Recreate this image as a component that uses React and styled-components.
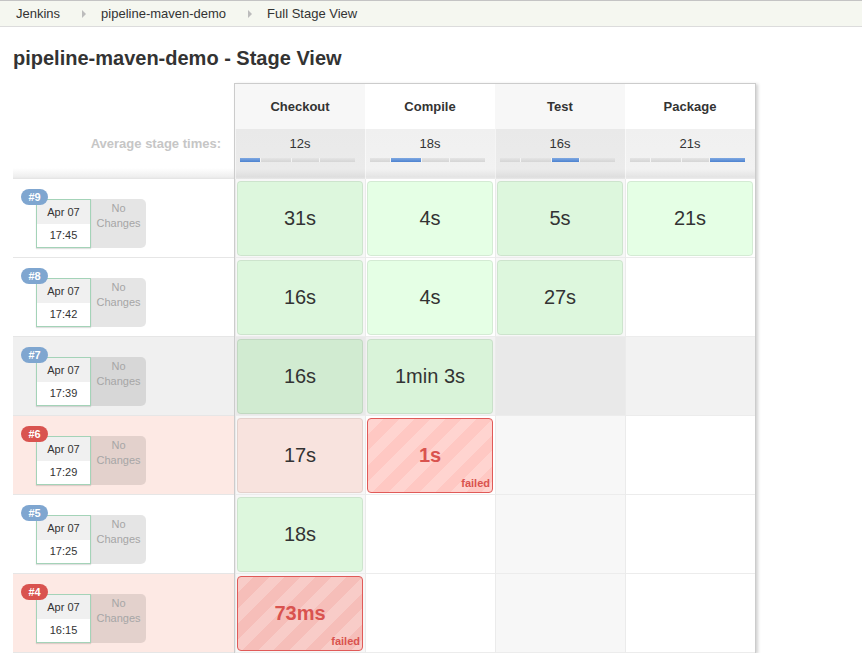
import React from 'react';
import styled, { createGlobalStyle, css } from 'styled-components';

const GlobalStyle = createGlobalStyle`
  body {
    margin: 0;
    background: #fff;
    color: #333;
    font-family: "Liberation Sans", Arial, sans-serif;
  }
`;

const stages = [
    { name: 'Checkout', avg: '12s', weight: 12 },
    { name: 'Compile', avg: '18s', weight: 18 },
    { name: 'Test', avg: '16s', weight: 16 },
    { name: 'Package', avg: '21s', weight: 21 },
];

const runs = [
    { id: 9, date: 'Apr 07', time: '17:45', tone: 'plain', cells: [{ t: '31s' }, { t: '4s' }, { t: '5s' }, { t: '21s' }] },
    { id: 8, date: 'Apr 07', time: '17:42', tone: 'plain', cells: [{ t: '16s' }, { t: '4s' }, { t: '27s' }, null] },
    { id: 7, date: 'Apr 07', time: '17:39', tone: 'gray', cells: [{ t: '16s' }, { t: '1min 3s' }, null, null] },
    { id: 6, date: 'Apr 07', time: '17:29', tone: 'failed', cells: [{ t: '17s', pink: true }, { t: '1s', failed: true }, null, null] },
    { id: 5, date: 'Apr 07', time: '17:25', tone: 'plain', cells: [{ t: '18s' }, null, null, null] },
    { id: 4, date: 'Apr 07', time: '16:15', tone: 'failed', cells: [{ t: '73ms', failed: true }, null, null, null] },
];

const rowBg = { plain: '#fff', gray: '#f0f0f0', failed: '#fde9e4' };

const cellBg = (tone, odd) => {
    if (tone === 'gray') return odd ? '#e9e9e9' : '#f2f2f2';
    return odd ? '#f7f7f7' : '#fff';
};

const App = () => {
    return (
        <Page>
            <GlobalStyle />
            <Breadcrumb>
                <Crumb>Jenkins</Crumb>
                <Arrow />
                <Crumb>pipeline-maven-demo</Crumb>
                <Arrow />
                <Crumb>Full Stage View</Crumb>
            </Breadcrumb>
            <Title>pipeline-maven-demo - Stage View</Title>
            <Board>
                <LeftCol>
                    <HeadSpacer />
                    <AvgLabel>Average stage times:</AvgLabel>
                    {runs.map((run) => (
                        <RunRow key={run.id} $tone={run.tone}>
                            <Badge $failed={run.tone === 'failed'}>#{run.id}</Badge>
                            <DateBox>
                                <DateTop>{run.date}</DateTop>
                                <DateBottom>{run.time}</DateBottom>
                            </DateBox>
                            <Changes>
                                No
                                <br />
                                Changes
                            </Changes>
                        </RunRow>
                    ))}
                </LeftCol>
                <Panel>
                    {stages.map((s, i) => (
                        <HeadCell key={s.name} $odd={i % 2 === 0}>
                            {s.name}
                        </HeadCell>
                    ))}
                    {stages.map((s, i) => (
                        <AvgCell key={s.name} $odd={i % 2 === 0}>
                            <AvgTime>{s.avg}</AvgTime>
                            <Bar>
                                {stages.map((b, j) => (
                                    <Segment key={b.name} $active={i === j} style={{ flexGrow: b.weight }} />
                                ))}
                            </Bar>
                        </AvgCell>
                    ))}
                    {runs.map((run) =>
                        run.cells.map((c, i) => (
                            <StageCell key={run.id + '-' + i} $bg={cellBg(run.tone, i % 2 === 0)}>
                                {c && c.failed && (
                                    <FailedBox $dark={run.id === 4}>
                                        {c.t}
                                        <FailedTag>failed</FailedTag>
                                    </FailedBox>
                                )}
                                {c && !c.failed && <OkBox $pink={c.pink}>{c.t}</OkBox>}
                            </StageCell>
                        ))
                    )}
                </Panel>
            </Board>
        </Page>
    );
};

var Page = styled.div`
    width: 862px;
`;

var Breadcrumb = styled.div`
    display: flex;
    align-items: center;
    height: 25px;
    padding-left: 16px;
    background: #f5f7f0;
    border-top: 1px solid #c4c4c4;
    border-bottom: 1px solid #dcdcdc;
    font-size: 13px;
`;

var Crumb = styled.span`
    color: #333;
`;

var Arrow = styled.span`
    width: 0;
    height: 0;
    margin: 0 15px 0 22px;
    border-left: 4px solid #bcbcbc;
    border-top: 4px solid transparent;
    border-bottom: 4px solid transparent;
`;

var Title = styled.h1`
    margin: 19px 0 13px 13px;
    font-size: 20px;
    line-height: 24px;
    font-weight: bold;
    color: #333;
`;

var Board = styled.div`
    display: flex;
    align-items: flex-start;
`;

var LeftCol = styled.div`
    width: 221px;
    margin-left: 13px;
`;

var HeadSpacer = styled.div`
    height: 46px;
`;

var AvgLabel = styled.div`
    height: 50px;
    box-sizing: border-box;
    padding: 7px 13px 0 0;
    line-height: 16px;
    text-align: right;
    font-size: 13px;
    font-weight: bold;
    color: #c6c6c6;
    background: linear-gradient(to bottom, #fff 78%, #eeeeee 96%, #e2e2e2);
`;

var RunRow = styled.div`
    position: relative;
    display: flex;
    height: 79px;
    box-sizing: border-box;
    padding: 20px 0 0 23px;
    background: ${(p) => rowBg[p.$tone]};
    border-bottom: 1px solid #e6e6e6;
`;

var Badge = styled.span`
    position: absolute;
    left: 8px;
    top: 10px;
    z-index: 1;
    width: 27px;
    height: 16px;
    border-radius: 8px;
    background: ${(p) => (p.$failed ? '#d9534f' : '#7fa6d0')};
    color: #fff;
    font-size: 11px;
    font-weight: bold;
    line-height: 16px;
    text-align: center;
`;

var DateBox = styled.div`
    width: 55px;
    height: 49px;
    box-sizing: border-box;
    border: 1px solid #a4d3b8;
    background: #fff;
    box-shadow: 0 1px 1px rgba(0, 0, 0, 0.12);
    font-size: 11px;
    text-align: center;
    color: #333;
`;

var DateTop = styled.div`
    height: 24px;
    line-height: 24px;
    background: #f0f0f0;
`;

var DateBottom = styled.div`
    line-height: 23px;
`;

var Changes = styled.div`
    width: 55px;
    height: 49px;
    box-sizing: border-box;
    padding-top: 2px;
    border-radius: 0 5px 5px 0;
    background: rgba(0, 0, 0, 0.1);
    color: #a6a6a6;
    font-size: 11px;
    line-height: 15px;
    text-align: center;
`;

var Panel = styled.div`
    display: grid;
    grid-template-columns: repeat(4, 130px);
    border: 1px solid #cccccc;
    border-bottom: none;
    box-shadow: 2px 1px 3px rgba(0, 0, 0, 0.18);
`;

var HeadCell = styled.div`
    height: 45px;
    display: flex;
    align-items: center;
    justify-content: center;
    background: ${(p) => (p.$odd ? '#f7f7f7' : '#fff')};
    font-size: 13px;
    font-weight: bold;
    color: #333;
`;

var AvgCell = styled.div`
    height: 50px;
    box-sizing: border-box;
    padding-top: 7px;
    box-shadow: inset 1px 0 0 rgba(255, 255, 255, 0.5);
    background: ${(p) =>
        p.$odd
            ? 'linear-gradient(to bottom, #e9e9e9, #ebebeb 80%, #dedede 96%, #e8e8e8)'
            : 'linear-gradient(to bottom, #f0f0f0, #f2f2f2 80%, #e4e4e4 96%, #ececec)'};
`;

var AvgTime = styled.div`
    line-height: 16px;
    font-size: 13px;
    text-align: center;
    color: #333;
`;

var Bar = styled.div`
    display: flex;
    width: 115px;
    height: 4px;
    margin: 6px 0 0 5px;
`;

var Segment = styled.div`
    flex-basis: 0;
    background: ${(p) => (p.$active ? 'linear-gradient(#7fa8e2, #4d82d0)' : 'linear-gradient(#e4e4e4, #d5d5d5)')};
    & + & {
        border-left: 1px solid #f4f4f4;
    }
`;

var StageCell = styled.div`
    height: 79px;
    box-sizing: border-box;
    padding: 2px;
    background: ${(p) => p.$bg};
    box-shadow: inset 1px 0 0 #ebebeb, inset 0 -1px 0 #ececec;
`;

var boxBase = css`
    position: relative;
    height: 100%;
    box-sizing: border-box;
    display: flex;
    align-items: center;
    justify-content: center;
    border-radius: 4px;
    font-size: 20px;
`;

var OkBox = styled.div`
    ${boxBase};
    border: 1px solid rgba(0, 0, 0, 0.08);
    background: ${(p) => (p.$pink ? '#f8e3de' : 'rgba(0, 255, 0, 0.1)')};
    color: #333;
`;

var FailedBox = styled.div`
    ${boxBase};
    border: 1px solid #e05a58;
    background-color: ${(p) => (p.$dark ? '#f6beb9' : '#ffc8c3')};
    background-image: repeating-linear-gradient(
        135deg,
        rgba(255, 255, 255, 0.22) 0 11px,
        transparent 11px 22px
    );
    color: #d9534f;
    font-weight: bold;
`;

var FailedTag = styled.span`
    position: absolute;
    right: 2px;
    bottom: 3px;
    font-size: 11px;
    font-weight: bold;
    color: #d9534f;
`;

export default App;
